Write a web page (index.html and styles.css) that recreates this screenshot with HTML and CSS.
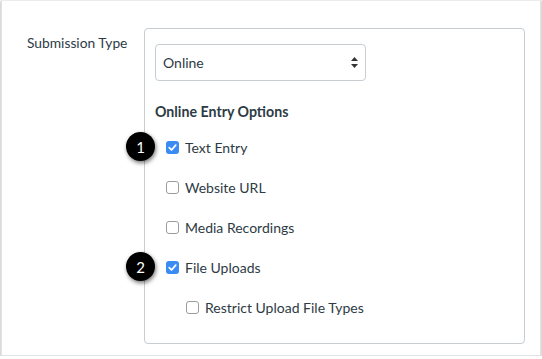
FILE: index.html
```html
<!DOCTYPE html>
<html lang="en">
<head>
  <meta charset="UTF-8">
  <title>Submission Type</title>
  <link rel="stylesheet" href="styles.css">
</head>
<body>
  <div class="frame">
    <div class="field-label">Submission Type</div>
    <div class="field-box">
      <!-- select -->
      <div class="select">
        <span>Online</span>
        <svg class="arrows" width="7" height="11" viewBox="0 0 7 11">
          <path d="M3.5 0 L7 4 L0 4 Z M3.5 11 L7 7 L0 7 Z" fill="#333"/>
        </svg>
      </div>

      <h3 class="options-title">Online Entry Options</h3>

      <div class="option">
        <span class="badge">1</span>
        <span class="check on"><svg width="13" height="13" viewBox="0 0 12 12"><path d="M3 6.2 L5.1 8.3 L9 3.8" fill="none" stroke="#fff" stroke-width="1.6" stroke-linecap="round" stroke-linejoin="round"/></svg></span>
        <span>Text Entry</span>
      </div>
      <div class="option">
        <span class="check"></span>
        <span>Website URL</span>
      </div>
      <div class="option">
        <span class="check"></span>
        <span>Media Recordings</span>
      </div>
      <div class="option">
        <span class="badge">2</span>
        <span class="check on"><svg width="13" height="13" viewBox="0 0 12 12"><path d="M3 6.2 L5.1 8.3 L9 3.8" fill="none" stroke="#fff" stroke-width="1.6" stroke-linecap="round" stroke-linejoin="round"/></svg></span>
        <span>File Uploads</span>
      </div>
      <div class="option nested">
        <span class="check"></span>
        <span>Restrict Upload File Types</span>
      </div>
    </div>
  </div>
</body>
</html>
```

FILE: styles.css
```css
* {
  box-sizing: border-box;
}
body {
  margin: 0;
  background: #fff;
  font-family: Lato, "Open Sans", sans-serif;
  color: #2d3b45;
}
.frame {
  display: flex;
  align-items: flex-start;
  width: 540px;
  height: 356px;
  margin-left: 1px;
  padding-top: 27px;
  border: 1px solid #e2e2e2;
  border-top-color: #ececec;
  box-shadow: 0 1px 2px rgba(0,0,0,0.45);
}
.field-label {
  width: 142px;
  padding-left: 25px;
  padding-top: 6px;
  font-size: 13.8px;
  line-height: 18px;
}
.field-box {
  width: 381px;
  height: 316px;
  padding: 15px 10px 0 10px;
  border: 1px solid #c7cdd1;
  border-radius: 4px;
}
.select {
  display: flex;
  align-items: center;
  justify-content: space-between;
  width: 211px;
  height: 37px;
  padding: 0 7px 0 7px;
  border: 1px solid #c7cdd1;
  border-radius: 4px;
  font-size: 14px;
}
.options-title {
  margin: 21px 0 5px 0;
  font-size: 14.2px;
  line-height: 20px;
  font-weight: 700;
}
.option {
  position: relative;
  display: flex;
  align-items: center;
  gap: 6px;
  height: 40px;
  padding-left: 11px;
  font-size: 14px;
}
.option.nested {
  padding-left: 31px;
}
.check {
  display: flex;
  align-items: center;
  justify-content: center;
  width: 13px;
  height: 13px;
  border: 1px solid #9c9c9c;
  border-radius: 3px;
  background: #fff;
}
.check.on {
  border: none;
  background: #3a8cf4;
}
/* callout badges over the box edge */
.badge {
  position: absolute;
  left: -29px;
  top: 5px;
  width: 29px;
  height: 29px;
  border-radius: 50%;
  background: #000;
  color: #fff;
  font-size: 15px;
  font-weight: 400;
  display: flex;
  align-items: center;
  justify-content: center;
  box-shadow: 1px 2px 4px rgba(0,0,0,0.55);
}
```
